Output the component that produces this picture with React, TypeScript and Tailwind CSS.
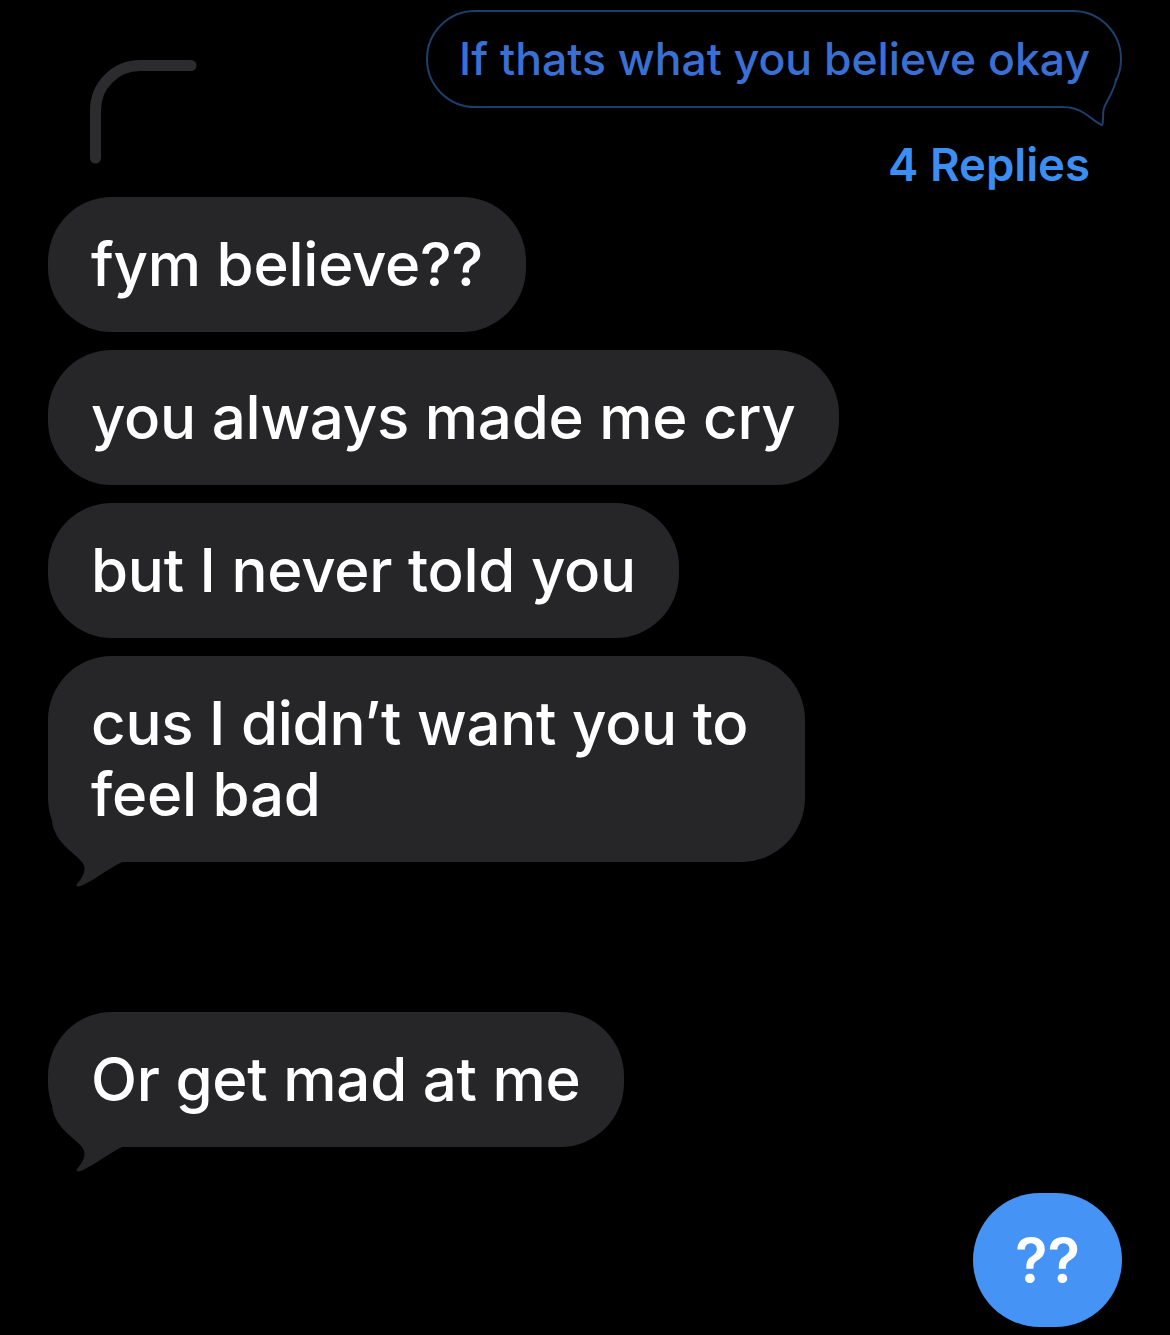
import React from 'react'

const font = { fontFamily: 'Inter, "Noto Sans", sans-serif' }

function GreyTail() {
  return (
    <svg
      className="absolute left-0 bottom-[-30px]"
      width="80"
      height="70"
      viewBox="0 0 80 70"
    >
      <path
        d="M4 0 C8 22 26 30 34 40 C40 48 34 56 29 62 C27 65 31 65 35 63 C48 57 58 48 74 40 L74 0 Z"
        fill="#262629"
      />
    </svg>
  )
}

function Bubble({
  children,
  tail,
  wide,
}: {
  children: React.ReactNode
  tail?: boolean
  wide?: boolean
}) {
  return (
    <div
      className={
        wide
          ? 'relative rounded-[64px] bg-[#262629] pl-[43px] pr-[57px] py-[32px] text-[60px] leading-[71px] font-medium text-white tracking-[-0.25px]'
          : 'relative rounded-[64px] bg-[#262629] px-[43px] py-[32px] text-[60px] leading-[71px] font-medium text-white tracking-[-0.25px]'
      }
    >
      {children}
      {tail && <GreyTail />}
    </div>
  )
}

export default function App() {
  return (
    <div
      className="relative h-[1335px] w-[1170px] overflow-hidden bg-black"
      style={font}
    >
      {/* thread header */}
      <div className="flex justify-between pt-[10px] pr-[48px]">
        <svg className="ml-[80px] mt-[45px]" width="120" height="120" viewBox="0 0 120 120">
          <path
            d="M15.5 103 V55 A44.5 44.5 0 0 1 60 10.5 H111"
            fill="none"
            stroke="#2c2c2e"
            strokeWidth="11"
            strokeLinecap="round"
          />
        </svg>

        <div className="flex flex-col items-end">
          <div className="relative flex h-[98px] items-center rounded-full border-2 border-[#1d3f69] pl-[31px] pr-[30px] text-[44.5px] leading-none font-medium text-[#3a70d4]">
            If thats what you believe okay
            <svg
              className="absolute right-[-2px] bottom-[-22px]"
              width="60"
              height="60"
              viewBox="0 0 60 60"
            >
              <path
                d="M54.2 10 C53 22 46 30 42 40 C40 47 42 53 40 57 C36 56 30 50 22 45 C16 41 10 39 0 39 Z"
                fill="#000"
              />
              <path
                d="M54.2 10 C53 22 46 30 42 40 C40 47 42 53 40 57 C36 56 30 50 22 45 C16 41 10 39 0 39"
                fill="none"
                stroke="#1d3f69"
                strokeWidth="2"
              />
            </svg>
          </div>
          <div className="mr-[32px] mt-[33px] text-[45.5px] leading-[48px] font-semibold text-[#3d8ef2]">
            4 Replies
          </div>
        </div>
      </div>

      {/* replies */}
      <div className="mt-[8px] flex flex-col items-start gap-[18px] pl-[48px]">
        <Bubble>fym believe??</Bubble>
        <Bubble>you always made me cry</Bubble>
        <Bubble>but I never told you</Bubble>
        <Bubble tail wide>
          cus I didn’t want you to
          <br />
          feel bad
        </Bubble>
        <div className="mt-[132px]">
          <Bubble tail>Or get mad at me</Bubble>
        </div>
      </div>

      {/* sent */}
      <div className="mt-[46px] flex justify-end pr-[48px]">
        <div className="flex h-[134px] w-[149px] items-center justify-center rounded-full bg-[#4593f5] text-[60px] font-semibold text-white">
          ??
        </div>
      </div>
    </div>
  )
}
